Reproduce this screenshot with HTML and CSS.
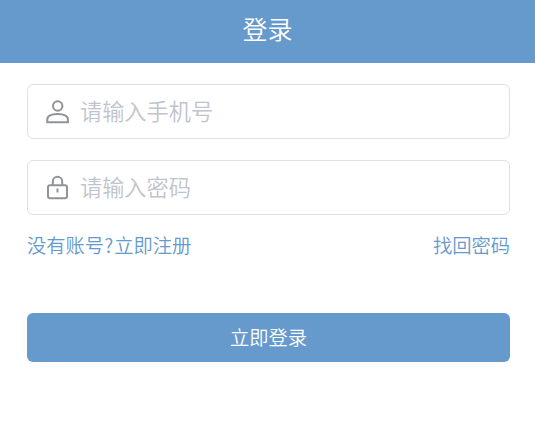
FILE: index.html
```
<!DOCTYPE html>
<html lang="zh">
<head>
	<meta charset="UTF-8">
	<title>登录</title>
	<link rel="stylesheet" href="styles.css">
</head>
<body>
	<header class="header">登录</header>
	<form class="login">
		<label class="field">
			<svg class="icon" viewBox="0 0 24 26">
				<circle cx="11.700" cy="7" r="4.700"/>
				<path d="M1.300 23.200v-2.700c0-3.600 4.300-5.500 10.300-5.500s10.300 1.900 10.300 5.500v2.700z"/>
			</svg>
			<input type="text" placeholder="请输入手机号">
		</label>
		<label class="field">
			<svg class="icon" viewBox="0 0 24 26">
				<rect x="2" y="10.200" width="19" height="13" rx="2"/>
				<path d="M6.800 10.200V6.500a4.700 4.700 0 0 1 9.400 0v3.700M11.500 13.500v4"/>
			</svg>
			<input type="password" placeholder="请输入密码">
		</label>
		<div class="links">
			<a>没有账号<span class="mark">?</span>立即注册</a>
			<a>找回密码</a>
		</div>
		<button class="btn" type="button">立即登录</button>
	</form>
</body>
</html>
```
FILE: styles.css
```
*{
	box-sizing:border-box;
}
body{
	margin:0;
	background:#fff;
	font-family:"Noto Sans CJK SC",sans-serif;
	font-weight:350;
}
.header{
	height:63px;
	line-height:57px;
	font-size:25px;
	text-align:center;
	color:#fff;
	background:#6699cc;
}
.login{
	padding:21px 25px 0 27px;
}
.field{
	display:flex;
	align-items:center;
	height:55px;
	margin-bottom:21px;
	padding-left:18px;
	border:1px solid #dfe0e3;
	border-radius:6px;
}
.icon{
	width:24px;
	height:26px;
	fill:none;
	stroke:#909399;
	stroke-width:2;
}
.field input{
	flex:1;
	min-width:0;
	height:40px;
	margin:0 0 4px 10px;
	padding:0;
	border:0;
	outline:0;
	background:none;
	font:350 22.2px "Noto Sans CJK SC",sans-serif;
}
.field input::placeholder{
	color:#c0c4cc;
}
.links{
	display:flex;
	justify-content:space-between;
	height:28px;
	line-height:18px;
	font-size:19.3px;
	color:#6699cc;
}
.mark{
	margin:0 1px 0 0;
}
.btn{
	display:block;
	width:100%;
	height:49px;
	margin-top:49px;
	padding:0 0 2px;
	border:0;
	border-radius:6px;
	font:350 19.3px "Noto Sans CJK SC",sans-serif;
	color:#fff;
	background:#6699cc;
}
```
